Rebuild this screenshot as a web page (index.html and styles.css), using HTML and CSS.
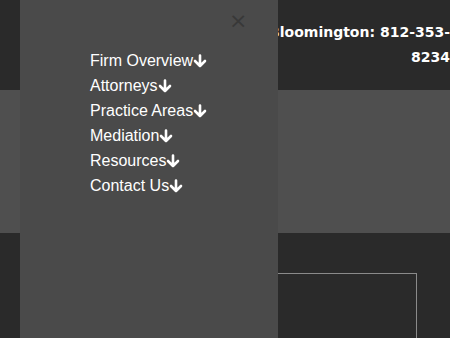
FILE: index.html
```html
<!DOCTYPE html>
<html lang="en">
<head>
    <meta charset="UTF-8">
    <meta name="viewport" content="width=device-width, initial-scale=1.0">
    <title>Law Office</title>
    <link rel="stylesheet" href="styles.css">
</head>
<body>
    <header class="top-bar">
        <div class="phone">Bloomington: 812-353-8234</div>
    </header>

    <div class="banner"></div>

    <main class="content">
        <div class="box"></div>
    </main>

    <nav class="side-menu">
        <button class="close-btn">&times;</button>
        <ul class="menu-list">
            <li><a href="#">Firm Overview<svg class="arrow" viewBox="0 0 14 14"><path d="M7 1.5V12M2 7l5 5 5-5"/></svg></a></li>
            <li><a href="#">Attorneys<svg class="arrow" viewBox="0 0 14 14"><path d="M7 1.5V12M2 7l5 5 5-5"/></svg></a></li>
            <li><a href="#">Practice Areas<svg class="arrow" viewBox="0 0 14 14"><path d="M7 1.5V12M2 7l5 5 5-5"/></svg></a></li>
            <li><a href="#">Mediation<svg class="arrow" viewBox="0 0 14 14"><path d="M7 1.5V12M2 7l5 5 5-5"/></svg></a></li>
            <li><a href="#">Resources<svg class="arrow" viewBox="0 0 14 14"><path d="M7 1.5V12M2 7l5 5 5-5"/></svg></a></li>
            <li><a href="#">Contact Us<svg class="arrow" viewBox="0 0 14 14"><path d="M7 1.5V12M2 7l5 5 5-5"/></svg></a></li>
        </ul>
    </nav>
</body>
</html>
```

FILE: styles.css
```css
html, body {
    overflow: hidden;
}

body {
    margin: 0;
    font-family: "Liberation Sans", Arial, sans-serif;
    background-color: #2a2a2a;
    color: white;
    height: 338px;
}

.top-bar {
    height: 90px;
    display: flex;
    justify-content: flex-end;
}

.phone {
    width: 200px;
    padding-top: 20px;
    text-align: right;
    font-family: "DejaVu Sans", sans-serif;
    font-weight: bold;
    font-size: 14px;
    line-height: 25px;
}

.banner {
    height: 143px;
    background-color: #4f4f4f;
}

.content {
    padding: 40px 33px 0 0;
    display: flex;
    justify-content: flex-end;
}

.box {
    width: 200px;
    height: 80px;
    border: 1px solid #8a8a8a;
}

.side-menu {
    position: fixed;
    top: 0;
    left: 20px;
    width: 258px;
    height: 100%;
    background-color: #4a4a4a;
    box-sizing: border-box;
    padding: 48px 0 0 70px;
}

.close-btn {
    position: absolute;
    top: 10px;
    left: 209px;
    background: none;
    border: none;
    padding: 0;
    width: 16px;
    height: 22px;
    font-family: "DejaVu Sans", sans-serif;
    font-size: 22px;
    line-height: 22px;
    color: #383838;
    cursor: pointer;
}

.menu-list {
    list-style: none;
    margin: 0;
    padding: 0;
}

.menu-list li {
    font-size: 16px;
    line-height: 25px;
    height: 25px;
}

.menu-list a {
    color: white;
    text-decoration: none;
}

.arrow {
    width: 14px;
    height: 14px;
    vertical-align: -2px;
    fill: none;
    stroke: white;
    stroke-width: 2.6;
    stroke-linecap: round;
    stroke-linejoin: round;
}
```
